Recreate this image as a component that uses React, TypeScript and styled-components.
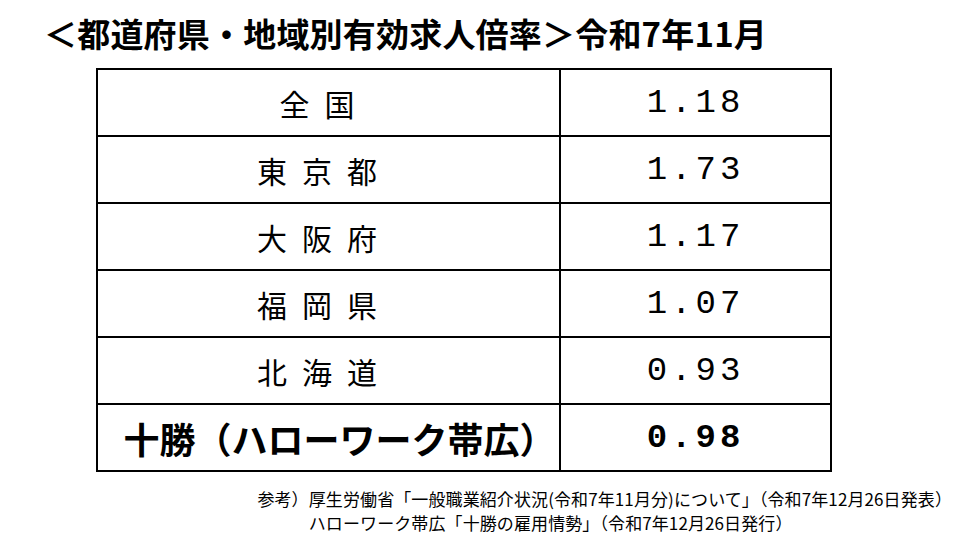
import { createGlobalStyle } from 'styled-components'
import styled from 'styled-components'

type Row = {
  area: string
  ratio: string
  strong?: boolean
}

const rows: Row[] = [
  { area: '全国', ratio: '1.18' },
  { area: '東京都', ratio: '1.73' },
  { area: '大阪府', ratio: '1.17' },
  { area: '福岡県', ratio: '1.07' },
  { area: '北海道', ratio: '0.93' },
  { area: '十勝（ハローワーク帯広）', ratio: '0.98', strong: true },
]

const GlobalStyle = createGlobalStyle`
  html, body {
    margin: 0;
    padding: 0;
    background: #ffffff;
  }
  body {
    width: 960px;
    height: 540px;
    overflow: hidden;
    font-family: 'Noto Sans CJK JP', 'Noto Sans', sans-serif;
    color: #000;
  }
`

export default function App() {
  return (
    <>
      <GlobalStyle />
      <Page>
        <Title>＜都道府県・地域別有効求人倍率＞令和7年11月</Title>
        <Table>
          <tbody>
            {rows.map((r) => (
              <tr key={r.area}>
                <AreaCell strong={r.strong}>{r.area}</AreaCell>
                <RatioCell strong={r.strong}>{r.ratio}</RatioCell>
              </tr>
            ))}
          </tbody>
        </Table>
        <Notes>
          <NoteLabel>参考）</NoteLabel>
          <NoteLines>
            <NoteLine>厚生労働省「一般職業紹介状況(令和7年11月分)について」（令和7年12月26日発表）</NoteLine>
            <NoteLine>ハローワーク帯広「十勝の雇用情勢」（令和7年12月26日発行）</NoteLine>
          </NoteLines>
        </Notes>
      </Page>
    </>
  )
}

const Page = styled.div`
  display: flex;
  flex-direction: column;
  width: 960px;
  height: 540px;
`

const Title = styled.h1`
  margin: 15px 0 0 44px;
  font-size: 33px;
  font-weight: 700;
  line-height: 36px;
  letter-spacing: 0.2px;
  white-space: nowrap;
`

const Table = styled.table`
  margin: 17px 0 0 96px;
  width: 736px;
  border-collapse: collapse;
  table-layout: fixed;

  td {
    border: 2px solid #000;
    height: 65px;
    text-align: center;
    vertical-align: middle;
  }
`

const AreaCell = styled.td<{ strong?: boolean }>`
  box-sizing: border-box;
  width: 463px;
  padding: ${(p) => (p.strong ? '0 0 0 22px' : '0 8px 0 0')};
  font-family: 'Noto Sans CJK JP', sans-serif;
  font-size: ${(p) => (p.strong ? '36px' : '30px')};
  font-weight: ${(p) => (p.strong ? 700 : 400)};
  letter-spacing: ${(p) => (p.strong ? '0' : '15px')};
  line-height: 1;
  white-space: nowrap;
`

const RatioCell = styled.td<{ strong?: boolean }>`
  padding: 0;
  font-family: 'Liberation Mono', 'DejaVu Sans Mono', monospace;
  font-size: 34px;
  font-weight: ${(p) => (p.strong ? 700 : 400)};
  letter-spacing: 4px;
  line-height: 1;
`

const Notes = styled.div`
  display: flex;
  margin: 15px 8px 0 auto;
  font-size: 17px;
  line-height: 24px;
  letter-spacing: 0.1px;
  white-space: nowrap;
`

const NoteLabel = styled.span`
  display: block;
`

const NoteLines = styled.div`
  display: flex;
  flex-direction: column;
`

const NoteLine = styled.span`
  display: block;
`
